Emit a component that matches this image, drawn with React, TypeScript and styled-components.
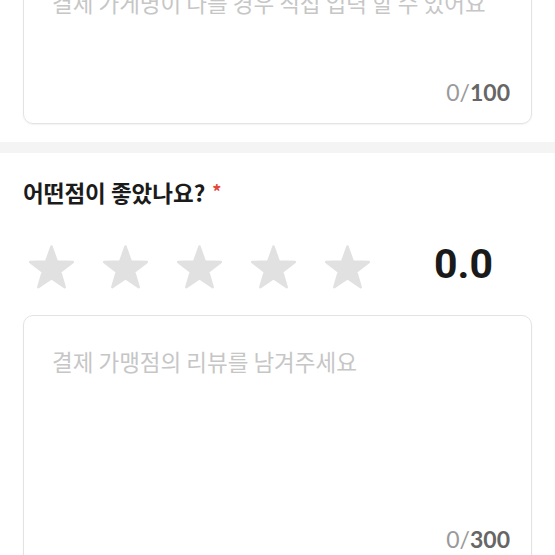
import React from "react";
import styled, { createGlobalStyle } from "styled-components";

const Global = createGlobalStyle`
  html, body { margin: 0; padding: 0; background: #fff; overflow: hidden; }
  body { font-family: "Noto Sans CJK KR", "Noto Sans", sans-serif; }
`;

const Page = styled.div`
  margin-top: -44px;
  display: flex;
  flex-direction: column;
`;

const Section = styled.section<{ $pt?: number }>`
  padding: ${(p) => p.$pt ?? 0}px 23px 0;
`;

const Card = styled.div<{ $h: number }>`
  height: ${(p) => p.$h}px;
  box-sizing: border-box;
  border: 1px solid #e3e3e3;
  border-radius: 10px;
  box-shadow: 0 1px 2px rgba(0, 0, 0, 0.05);
  padding: 30px 21px 18px 28px;
  display: flex;
  flex-direction: column;
`;

const Area = styled.textarea`
  flex: 1;
  border: none;
  outline: none;
  resize: none;
  padding: 0;
  margin: 0;
  font-family: "Noto Sans CJK KR", sans-serif;
  font-size: 22.5px;
  line-height: 31px;
  color: #333;
  background: transparent;
  &::placeholder {
    color: #c6c6c6;
  }
`;

const Counter = styled.div`
  align-self: flex-end;
  font-family: Lato, "Noto Sans", sans-serif;
  font-size: 23px;
  line-height: 26px;
  color: #9a9a9a;
  b {
    color: #666;
    font-weight: 700;
  }
`;

const Divider = styled.div`
  margin-top: 18px;
  height: 11px;
  background: #f4f4f4;
`;

const Title = styled.h2`
  margin: 0;
  font-size: 22.5px;
  line-height: 29px;
  font-weight: 700;
  color: #1b1b1b;
`;

const Required = styled.span`
  color: #e5463c;
  font-size: 18px;
  margin-left: 7px;
  vertical-align: 3px;
`;

const RatingRow = styled.div`
  margin-top: 37px;
  padding: 0 39px 0 5px;
  display: flex;
  align-items: center;
`;

const Stars = styled.div`
  display: flex;
  gap: 27px;
`;

const StarSvg = styled.svg`
  width: 47px;
  height: 46px;
  display: block;
`;

const Score = styled.div`
  margin-left: auto;
  align-self: flex-start;
  font-family: Roboto, "Noto Sans", sans-serif;
  font-weight: 700;
  font-size: 41px;
  line-height: 40px;
  color: #1a1a1a;
`;

const starPoints = (() => {
  const cx = 23.5, cy = 25, R = 22.5, r = 9.2;
  const pts: string[] = [];
  for (let i = 0; i < 10; i++) {
    const a = (Math.PI / 5) * i - Math.PI / 2;
    const rad = i % 2 === 0 ? R : r;
    pts.push(`${(cx + rad * Math.cos(a)).toFixed(2)},${(cy + rad * Math.sin(a)).toFixed(2)}`);
  }
  return pts.join(" ");
})();

const Star = () => (
  <StarSvg viewBox="0 0 47 46">
    <polygon points={starPoints} fill="#e1e1e1" stroke="#e1e1e1" strokeWidth="2.4" strokeLinejoin="round" />
  </StarSvg>
);

export default function App() {
  return (
    <>
      <Global />
      <Page>
        <Section>
          <Card $h={168}>
            <Area placeholder="결제 가게명이 다를 경우 직접 입력 할 수 있어요" />
            <Counter>
              0/<b>100</b>
            </Counter>
          </Card>
        </Section>
        <Divider />
        <Section $pt={24}>
          <Title>
            어떤점이 좋았나요?<Required>*</Required>
          </Title>
          <RatingRow>
            <Stars>
              {[0, 1, 2, 3, 4].map((i) => (
                <Star key={i} />
              ))}
            </Stars>
            <Score>0.0</Score>
          </RatingRow>
        </Section>
        <Section $pt={25}>
          <Card $h={256}>
            <Area placeholder="결제 가맹점의 리뷰를 남겨주세요" />
            <Counter>
              0/<b>300</b>
            </Counter>
          </Card>
        </Section>
      </Page>
    </>
  );
}
